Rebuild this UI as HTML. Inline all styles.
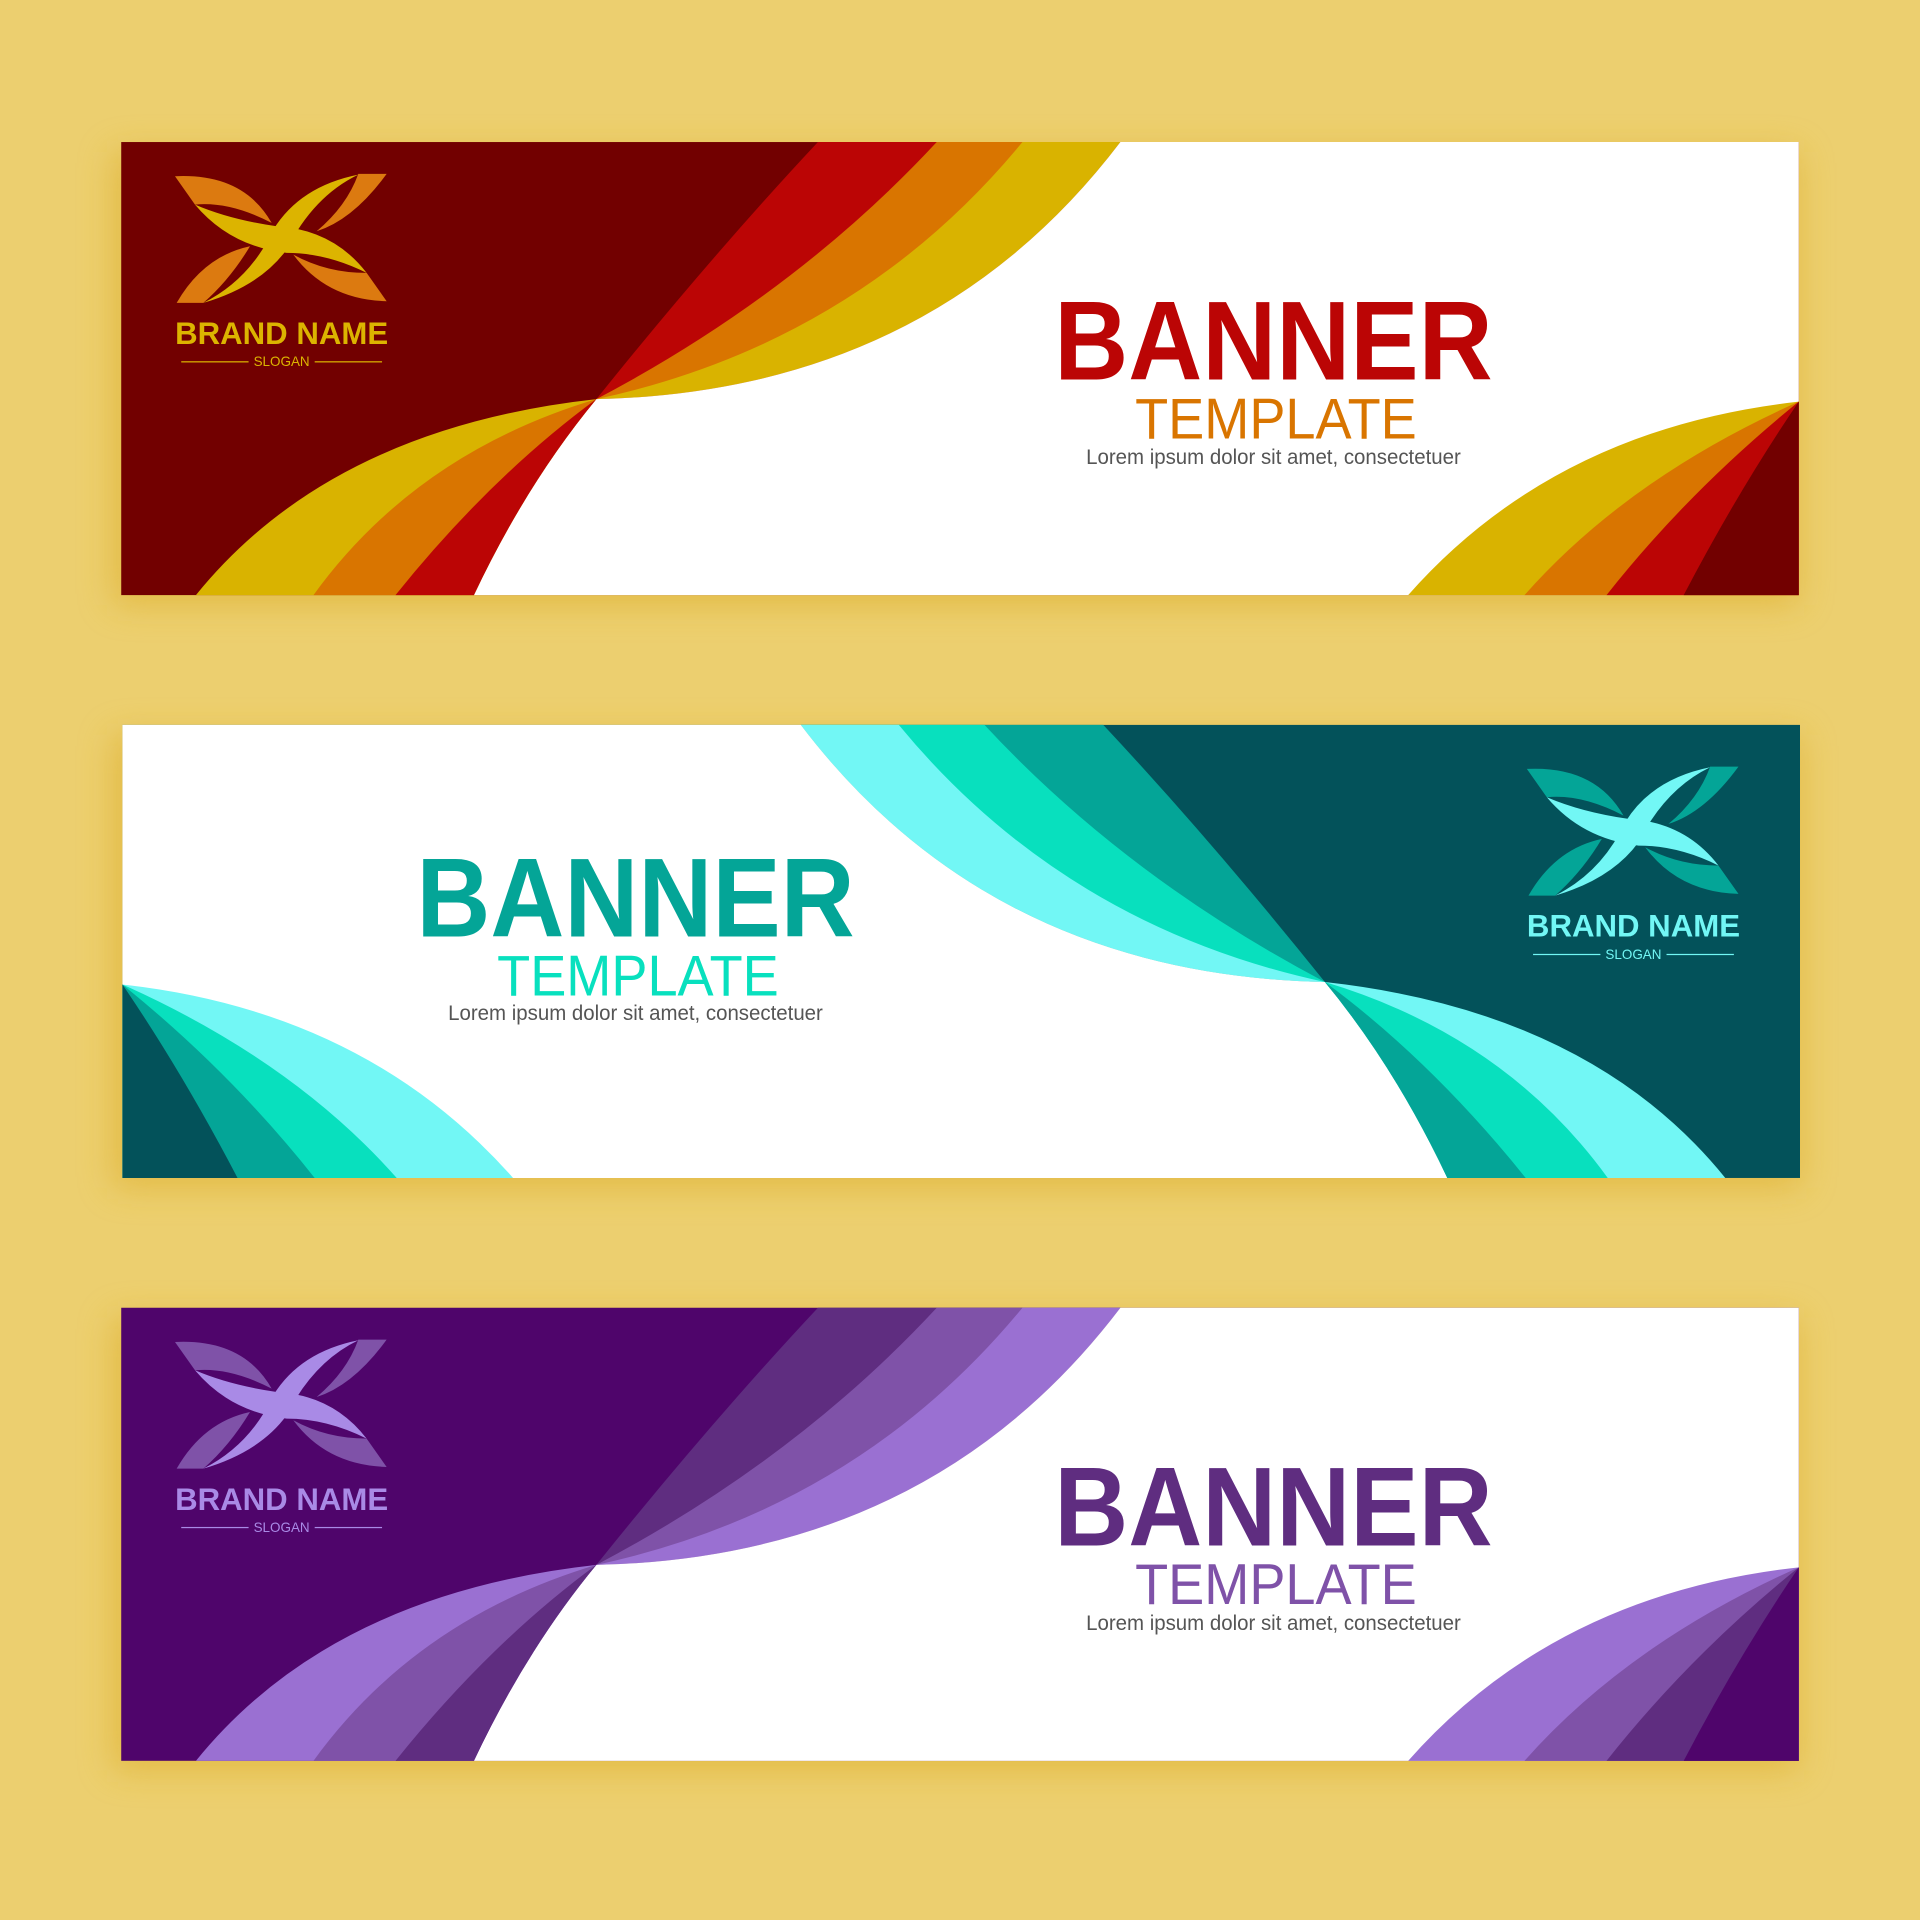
<!DOCTYPE html>
<html><head><meta charset="utf-8"><style>
html,body{margin:0;padding:0;background:#eccf6f;}
svg{display:block}
text{font-family:"Liberation Sans",sans-serif}
.c0{fill:var(--c0)}.c1{fill:var(--c1)}.c2{fill:var(--c2)}.c3{fill:var(--c3)}
.l1{fill:var(--l1)}.l2{fill:var(--l2)}
.A{--c0:#720000;--c1:#bb0505;--c2:#d97500;--c3:#d9b300;--l1:#dc7a10;--l2:#dcb400}
.B{--c0:#03525a;--c1:#04a597;--c2:#08e0be;--c3:#72f7f5;--l1:#04a597;--l2:#72f7f5}
.C{--c0:#4f056b;--c1:#5f2d80;--c2:#7f52a8;--c3:#9a70d2;--l1:#7f52a8;--l2:#a98ae6}
</style></head><body>
<svg width="1920" height="1920" viewBox="0 0 1568 1568" xmlns="http://www.w3.org/2000/svg">
<defs>
<filter id="sh" x="-10%" y="-30%" width="120%" height="160%">
<feGaussianBlur stdDeviation="14"/>
</filter>
<g id="waves">
 <rect class="c0" x="99" y="116" width="1370" height="370"/>
 <path class="c1" d="M487,326 Q580,210 668,116 L915,116 Q760,320 487,326Z"/>
 <path class="c2" d="M487,326 Q650,240 765,116 L915,116 Q760,320 487,326Z"/>
 <path class="c3" d="M487,326 Q700,280 835,116 L915,116 Q760,320 487,326Z"/>
 <path fill="#fff" d="M487,326 Q760,320 915,116 L1469,116 L1469,486 L387,486 Q430,395 487,326Z"/>
 <path class="c3" d="M487,326 Q270,350 160,486 L387,486 Q430,395 487,326Z"/>
 <path class="c2" d="M487,326 Q340,370 256,486 L387,486 Q430,395 487,326Z"/>
 <path class="c1" d="M487,326 Q400,390 323,486 L387,486 Q430,395 487,326Z"/>
 <path class="c3" d="M1469,328 Q1270,350 1150,486 L1469,486Z"/>
 <path class="c2" d="M1469,328 Q1330,390 1245,486 L1469,486Z"/>
 <path class="c1" d="M1469,328 Q1380,400 1312,486 L1469,486Z"/>
 <path class="c0" d="M1469,328 Q1420,400 1375,486 L1469,486Z"/>
</g>
<g id="logo">
 <g transform="translate(98,114) scale(0.2722)">
 <path class="l1" d="M165,110 Q370,100 455,250 Q330,185 225,195Z"/>
 <path class="l1" d="M715,103 L800,103 Q700,240 590,275 Q680,200 715,103Z"/>
 <path class="l1" d="M170,490 L250,490 Q330,420 390,320 Q250,350 170,490Z"/>
 <path class="l1" d="M520,345 Q620,400 740,400 L800,485 Q620,480 520,345Z"/>
 <path class="l2" d="M225,195 Q330,240 470,260 Q640,270 740,400 Q620,340 500,340 Q330,320 225,195Z"/>
 <path class="l2" d="M715,105 Q540,140 460,270 Q390,420 250,490 Q420,440 500,330 Q580,170 715,105Z"/>
 </g>
 <text class="l2" x="230" y="281" font-size="26" font-weight="bold" text-anchor="middle" textLength="174" lengthAdjust="spacingAndGlyphs">BRAND NAME</text>
 <text class="l2" x="230" y="299" font-size="11" text-anchor="middle">SLOGAN</text>
 <rect class="l2" x="148" y="295" width="55" height="1"/>
 <rect class="l2" x="257" y="295" width="55" height="1"/>
</g>
</defs>

<rect x="92" y="124" width="1377" height="370" fill="#dcaa20" opacity="0.55" filter="url(#sh)"/>
<rect x="92" y="600" width="1379" height="370" fill="#dcaa20" opacity="0.55" filter="url(#sh)"/>
<rect x="92" y="1076" width="1377" height="370" fill="#dcaa20" opacity="0.55" filter="url(#sh)"/>

<g class="A">
 <use href="#waves"/>
 <use href="#logo"/>
 <text x="1040" y="310" font-size="92" font-weight="bold" fill="#bb0505" text-anchor="middle" textLength="358" lengthAdjust="spacingAndGlyphs">BANNER</text>
 <text x="1042" y="358" font-size="47" fill="#d97500" text-anchor="middle" textLength="230" lengthAdjust="spacingAndGlyphs">TEMPLATE</text>
 <text x="1040" y="379" font-size="17" fill="#555" text-anchor="middle" textLength="306" lengthAdjust="spacingAndGlyphs">Lorem ipsum dolor sit amet, consectetuer</text>
</g>

<g class="B">
 <g transform="translate(1569,476) scale(-1,1)"><use href="#waves"/></g>
 <g transform="translate(1104,484)"><use href="#logo"/></g>
 <text x="519" y="765" font-size="92" font-weight="bold" fill="#04a597" text-anchor="middle" textLength="358" lengthAdjust="spacingAndGlyphs">BANNER</text>
 <text x="521" y="813" font-size="47" fill="#08e0be" text-anchor="middle" textLength="230" lengthAdjust="spacingAndGlyphs">TEMPLATE</text>
 <text x="519" y="833" font-size="17" fill="#555" text-anchor="middle" textLength="306" lengthAdjust="spacingAndGlyphs">Lorem ipsum dolor sit amet, consectetuer</text>
</g>

<g class="C">
 <g transform="translate(0,952)"><use href="#waves"/><use href="#logo"/></g>
 <text x="1040" y="1262" font-size="92" font-weight="bold" fill="#5f2d80" text-anchor="middle" textLength="358" lengthAdjust="spacingAndGlyphs">BANNER</text>
 <text x="1042" y="1310" font-size="47" fill="#7f52a8" text-anchor="middle" textLength="230" lengthAdjust="spacingAndGlyphs">TEMPLATE</text>
 <text x="1040" y="1331" font-size="17" fill="#555" text-anchor="middle" textLength="306" lengthAdjust="spacingAndGlyphs">Lorem ipsum dolor sit amet, consectetuer</text>
</g>
</svg>
</body></html>
